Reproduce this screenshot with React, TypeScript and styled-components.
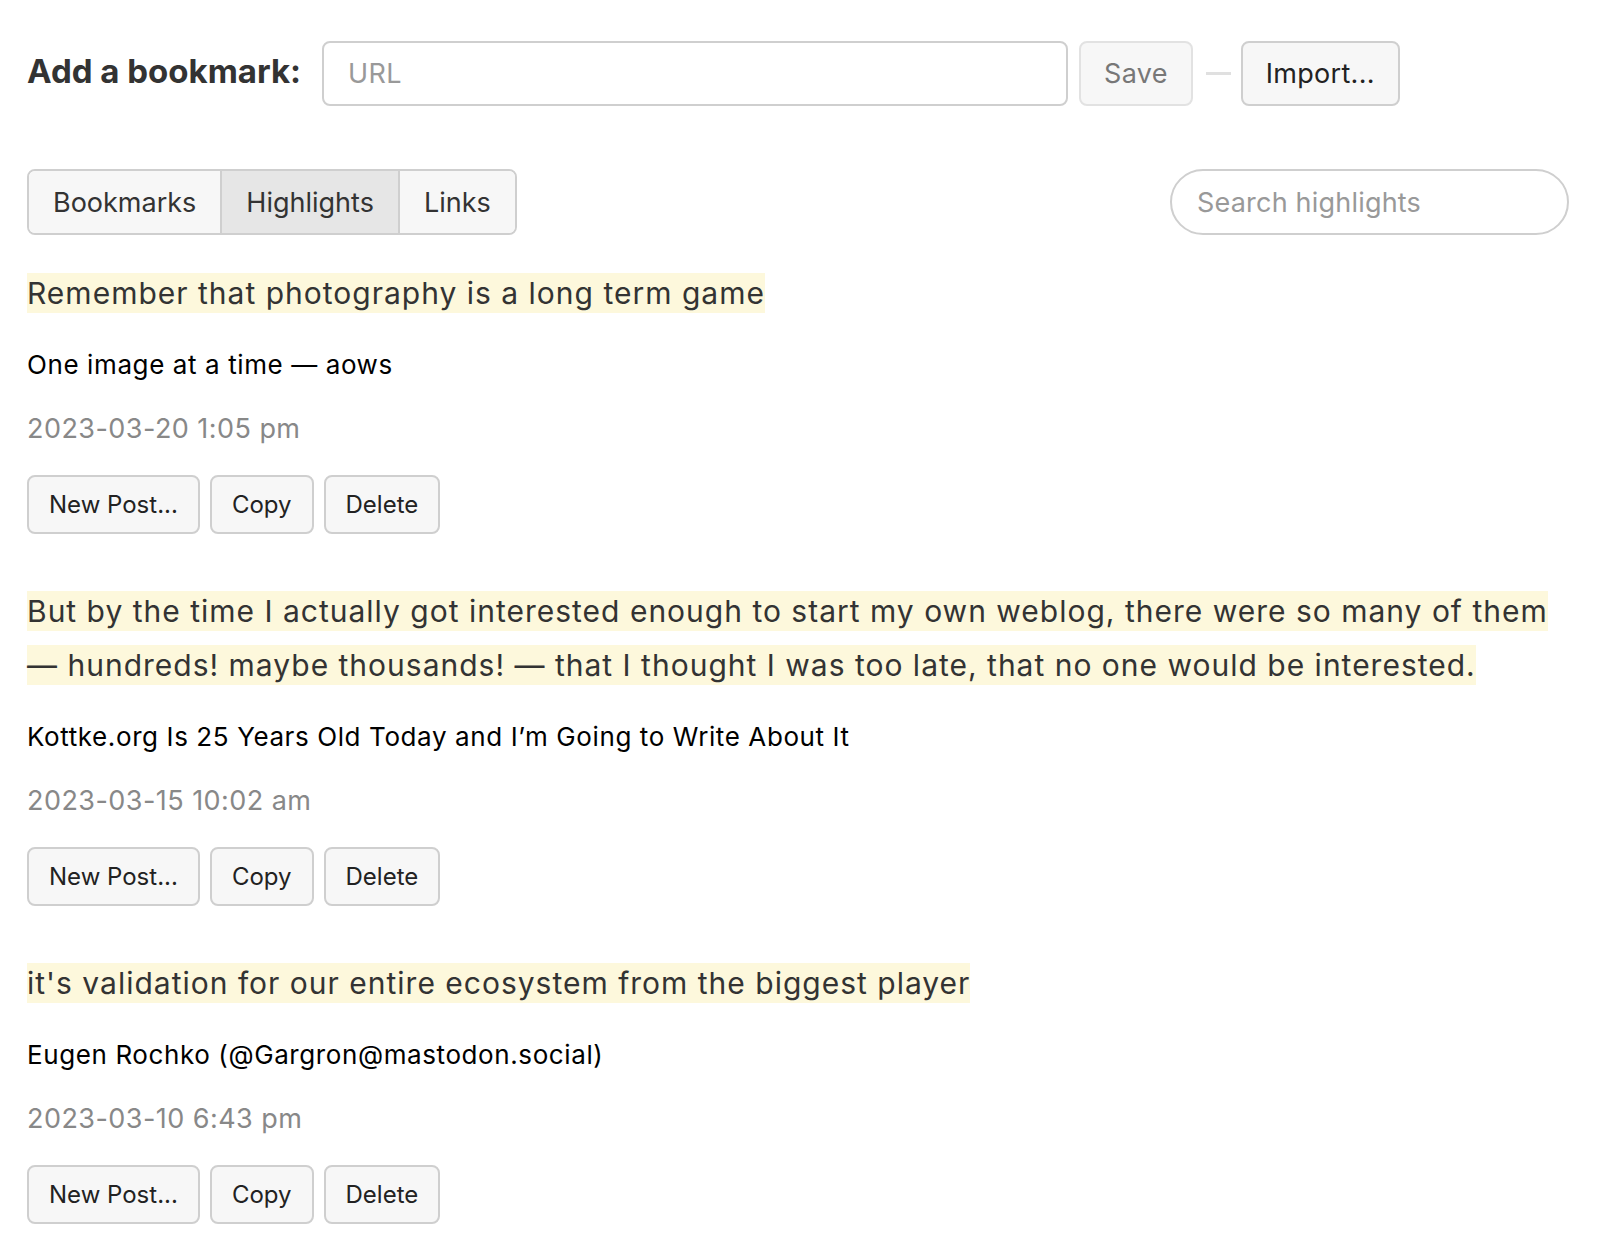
import * as React from "react"
import styled, { createGlobalStyle } from "styled-components"

const GlobalStyle = createGlobalStyle`
body {
    margin: 0;
    background: #fff;
    font-family: Inter, "Noto Sans", sans-serif;
    color: #333;
}
`

const Page = styled("div")`
padding: 41px 33px 40px 27px;
`

const AddRow = styled("form")`
display: flex;
align-items: center;
height: 65px;
`

const Label = styled("h2")`
margin: 0 21px 6px 0;
font-size: 33px;
font-weight: 700;
color: #333;
`

const UrlInput = styled("input")`
box-sizing: border-box;
width: 746px;
height: 65px;
padding: 0 24px;
border: 2px solid #cfcfcf;
border-radius: 8px;
font-family: inherit;
font-size: 27px;
letter-spacing: 0.3px;
color: #333;

&::placeholder {
    color: #999;
}
`

const Button = styled("button")<{ $disabled?: boolean; $size?: "big" | "small" }>`
box-sizing: border-box;
height: ${p => (p.$size === "small" ? "59px" : "65px")};
padding: ${p => (p.$size === "small" ? "0 20px" : "0 23px")};
background: #f7f7f7;
border: 2px solid ${p => (p.$disabled ? "#e2e2e2" : "#cfcfcf")};
border-radius: 8px;
font-family: inherit;
font-size: ${p => (p.$size === "small" ? "24px" : "27px")};
letter-spacing: ${p => (p.$size === "small" ? "0" : "0.3px")};
color: ${p => (p.$disabled ? "#777" : "#222")};
`

const Dash = styled("span")`
display: block;
width: 25px;
height: 3px;
margin: 0 10px 0 13px;
background: #e0e0e0;
`

const ToolRow = styled("div")`
display: flex;
justify-content: space-between;
align-items: center;
margin-top: 63px;
`

const Tabs = styled("div")`
display: flex;
height: 66px;
border: 2px solid #cfcfcf;
border-radius: 8px;
overflow: hidden;
box-sizing: border-box;
`

const Tab = styled("button")<{ $active?: boolean }>`
padding: 0 24px;
border: 0;
border-left: 2px solid #cfcfcf;
background: ${p => (p.$active ? "#e6e6e6" : "#f7f7f7")};
font-family: inherit;
font-size: 27px;
color: #333;

&:first-child {
    border-left: 0;
}
`

const Search = styled("input")`
box-sizing: border-box;
width: 399px;
height: 66px;
padding: 0 25px;
border: 2px solid #cfcfcf;
border-radius: 33px;
font-family: inherit;
font-size: 27px;
letter-spacing: 0.2px;

&::placeholder {
    color: #999;
}
`

const List = styled("div")`
margin-top: 31px;
`

const Item = styled("div")`
margin-bottom: 50px;
`

const Quote = styled("p")`
margin: 0;
font-size: 30px;
line-height: 54px;
letter-spacing: 1px;
color: #333;

mark {
    background: #fdf8dc;
    color: inherit;
    padding: 2px 0;
}
`

const Source = styled("p")`
margin: 25px 0 0;
font-size: 26px;
line-height: 40px;
letter-spacing: 0.6px;
color: #000;
`

const DateLine = styled("p")`
margin: 24px 0 0;
font-size: 27px;
line-height: 40px;
letter-spacing: 0.45px;
color: #888;
`

const Actions = styled("div")`
display: flex;
gap: 10px;
margin-top: 26px;
`

const highlights = [
    {
        text: "Remember that photography is a long term game",
        source: "One image at a time — aows",
        date: "2023-03-20 1:05 pm",
    },
    {
        text: "But by the time I actually got interested enough to start my own weblog, there were so many of them — hundreds! maybe thousands! — that I thought I was too late, that no one would be interested.",
        source: "Kottke.org Is 25 Years Old Today and I’m Going to Write About It",
        date: "2023-03-15 10:02 am",
    },
    {
        text: "it's validation for our entire ecosystem from the biggest player",
        source: "Eugen Rochko (@Gargron@mastodon.social)",
        date: "2023-03-10 6:43 pm",
    },
]

export default function App() {
    return <Page>
        <GlobalStyle />
        <AddRow onSubmit={e => e.preventDefault()}>
            <Label>Add a bookmark:</Label>
            <UrlInput placeholder="URL" />
            <Button $disabled style={{ marginLeft: 11 }}>Save</Button>
            <Dash />
            <Button type="button">Import...</Button>
        </AddRow>
        <ToolRow>
            <Tabs>
                <Tab>Bookmarks</Tab>
                <Tab $active>Highlights</Tab>
                <Tab>Links</Tab>
            </Tabs>
            <Search placeholder="Search highlights" />
        </ToolRow>
        <List>
            {highlights.map(h => (
                <Item key={h.date}>
                    <Quote><mark>{h.text}</mark></Quote>
                    <Source>{h.source}</Source>
                    <DateLine>{h.date}</DateLine>
                    <Actions>
                        <Button $size="small">New Post...</Button>
                        <Button $size="small">Copy</Button>
                        <Button $size="small">Delete</Button>
                    </Actions>
                </Item>
            ))}
        </List>
    </Page>
}
